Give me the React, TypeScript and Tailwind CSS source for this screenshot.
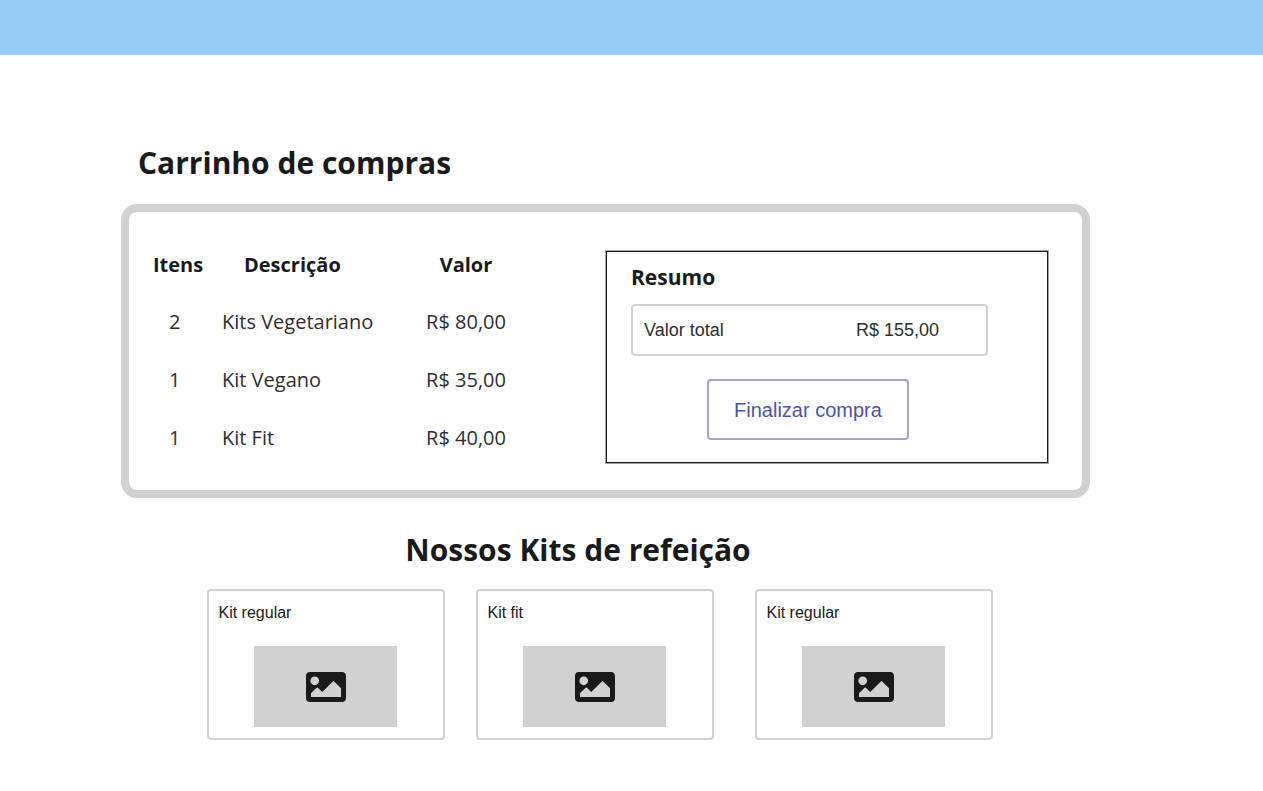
import { FaImage } from "react-icons/fa";

const items = [
  { quantity: 2, description: "Kits Vegetariano", price: "R$ 80,00" },
  { quantity: 1, description: "Kit Vegano", price: "R$ 35,00" },
  { quantity: 1, description: "Kit Fit", price: "R$ 40,00" },
];

function KitCard({ name }: { name: string }) {
  return (
    <article className="w-[238px] rounded border-2 border-[#d1d1d1] px-[10px] pt-[10px] pb-[11px]">
      <h3 className="font-['Liberation_Sans',sans-serif] text-base leading-6">{name}</h3>
      <div className="mx-auto mt-[21px] flex h-[81px] w-[143px] items-center justify-center bg-[#d1d1d1]">
        <FaImage size={40} aria-hidden="true" />
      </div>
    </article>
  );
}

export default function App() {
  return (
    <div className="min-h-screen bg-white font-['Open_Sans',sans-serif] text-[#1a1a1a]">
      <header className="h-[55px] bg-[#96cbf5]" />
      <main className="pt-[88px] pr-[173px] pb-12 pl-[121px]">
        <section>
          <h1 className="pl-[17px] text-[30px] leading-10 font-bold">Carrinho de compras</h1>
          <div className="mt-[21px] flex items-start justify-between rounded-2xl border-8 border-[#d1d1d1] pt-6 pr-[34px] pb-[23px] pl-6">
            <table className="table-fixed border-collapse text-xl leading-6">
              <colgroup>
                <col className="w-[69px]" />
                <col className="w-[178px]" />
                <col className="w-[132px]" />
              </colgroup>
              <thead>
                <tr className="h-[57px] text-left">
                  <th scope="col" className="font-bold">Itens</th>
                  <th scope="col" className="pl-[22px] font-bold">Descrição</th>
                  <th scope="col" className="text-center font-bold">Valor</th>
                </tr>
              </thead>
              <tbody className="text-[#2e2e2e]">
                {items.map((item) => (
                  <tr key={item.description} className="h-[58px]">
                    <td className="pl-4">{item.quantity}</td>
                    <td>{item.description}</td>
                    <td className="text-center">{item.price}</td>
                  </tr>
                ))}
              </tbody>
            </table>
            <aside className="mt-[15px] w-[442px] border border-[#1a1a1a] pt-3 pr-[59px] pb-[22px] pl-6 outline outline-[#a3a3a3]">
              <h2 className="text-[21px] leading-[26px] font-bold">Resumo</h2>
              <div className="mt-[14px] flex h-[52px] items-center justify-between rounded border-2 border-[#d1d1d1] pr-[47px] pl-[11px] font-['Liberation_Sans',sans-serif] text-lg text-[#2e2e2e]">
                <span>Valor total</span>
                <span>R$ 155,00</span>
              </div>
              <button
                type="button"
                className="mt-[23px] ml-19 block h-[61px] w-[202px] rounded border-2 border-[#a0a6cf] font-['Liberation_Sans',sans-serif] text-xl text-[#4c53a4]"
              >
                Finalizar compra
              </button>
            </aside>
          </div>
        </section>
        <section className="mt-8">
          <h2 className="pr-[55px] text-center text-[30px] leading-10 font-bold">Nossos Kits de refeição</h2>
          <div className="mt-[19px] grid grid-cols-[269px_279px_238px] justify-center pr-3">
            <KitCard name="Kit regular" />
            <KitCard name="Kit fit" />
            <KitCard name="Kit regular" />
          </div>
        </section>
      </main>
    </div>
  );
}
